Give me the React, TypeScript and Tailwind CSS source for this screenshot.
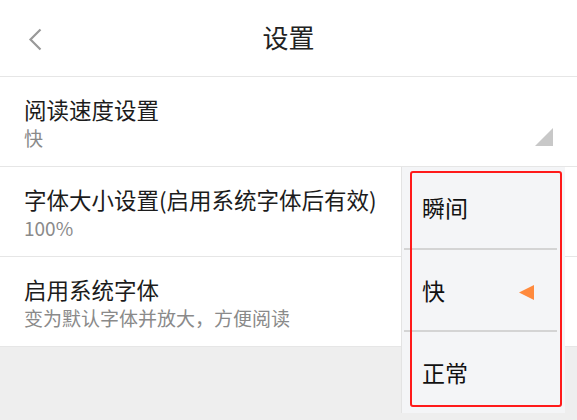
import React from "react";

const font = { fontFamily: '"Noto Sans CJK SC", "Noto Sans", sans-serif' };

const rows = [
  { title: "阅读速度设置", sub: "快", arrow: true },
  { title: "字体大小设置(启用系统字体后有效)", sub: "100%" },
  { title: "启用系统字体", sub: "变为默认字体并放大，方便阅读" },
];

const options = ["瞬间", "快", "正常"];

export default function App() {
  return (
    <div className="relative w-[577px] h-[420px] bg-[#eeeeee] overflow-hidden" style={font}>
      {/* header */}
      <div className="relative flex items-center justify-center h-[77px] bg-white border-b border-[#e6e6e6]">
        <svg className="absolute left-[27px] top-[28px]" width="17" height="23" viewBox="0 0 17 23">
          <path d="M13.5 1.5 L3.5 11.5 L13.5 21.5" fill="none" stroke="#999999" strokeWidth="2.2" />
        </svg>
        <span className="text-[26px] text-[#222] leading-none -mt-[2px]">设置</span>
      </div>

      {/* settings list */}
      {rows.map((r) => (
        <div
          key={r.title}
          className="relative flex flex-col h-[90px] bg-white border-b border-[#e6e6e6] pl-[24px] pt-[18px]"
        >
          <div className="text-[22.5px] leading-[28px] text-[#1c1c1c]">{r.title}</div>
          <div className="text-[19px] leading-[22px] mt-[4px] text-[#8a8a8a]">{r.sub}</div>
          {r.arrow && (
            <svg className="absolute right-[24px] bottom-[20px]" width="18" height="18" viewBox="0 0 18 18">
              <path d="M18 0 L18 18 L0 18 Z" fill="#c8c8c8" />
            </svg>
          )}
        </div>
      ))}

      {/* dropdown menu */}
      <div className="absolute left-[401px] top-[167px] w-[164px] h-[246px] bg-[#f4f5f7] border-l border-[#e3e3e3] flex flex-col">
        {options.map((o, i) => (
          <div
            key={o}
            className={
              "relative flex items-center flex-1 text-[23px] text-[#111] " +
              (i < 2 ? "border-b-2 border-[#d4d4d4] ml-[2px] mr-[8px] pl-[18px]" : "pl-[20px]")
            }
          >
            {o}
            {o === "快" && (
              <svg className="absolute left-[115px] top-[35px]" width="15" height="15" viewBox="0 0 15 15">
                <path d="M0 7.5 L15 0 L15 15 Z" fill="#ff8a3d" />
              </svg>
            )}
          </div>
        ))}
      </div>

      {/* red highlight */}
      <div className="absolute left-[410px] top-[171px] w-[152px] h-[236px] border-2 border-[#ff1a1a] rounded-[3px]" />
    </div>
  );
}
